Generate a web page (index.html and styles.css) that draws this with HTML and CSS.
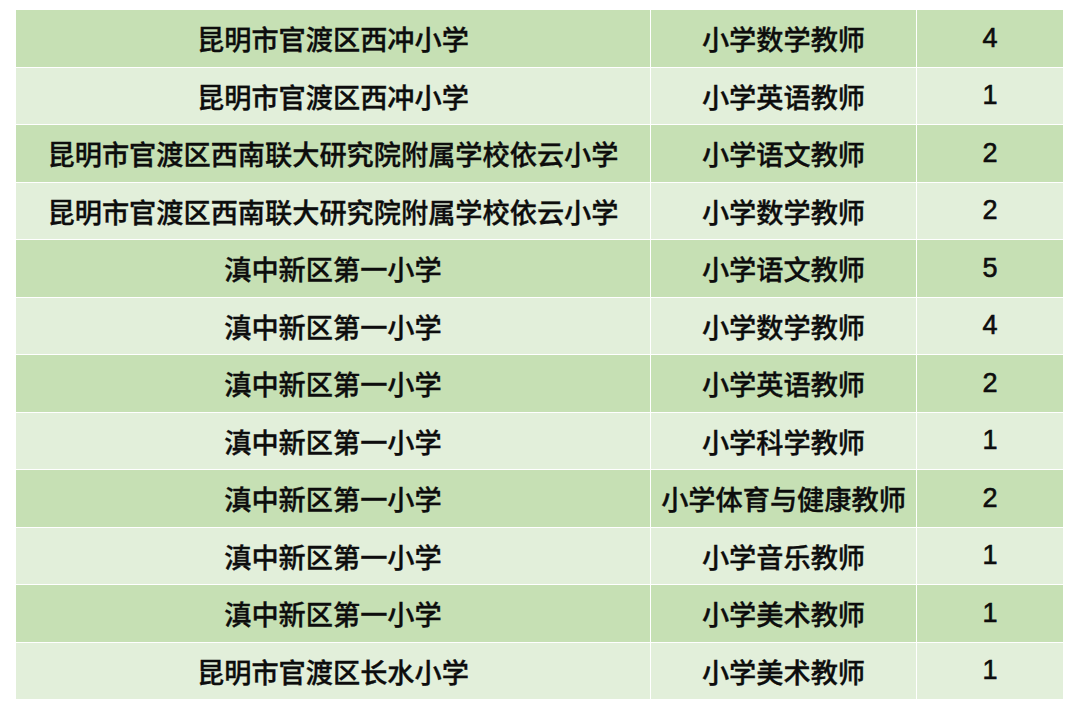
FILE: index.html
```html
<!DOCTYPE html>
<html lang="zh">
<head>
<meta charset="utf-8">
<link rel="stylesheet" href="styles.css">
</head>
<body>
<div class="table">
  <div class="row dark"><div class="cell">昆明市官渡区西冲小学</div><div class="cell">小学数学教师</div><div class="cell num">4</div></div>
  <div class="row light"><div class="cell">昆明市官渡区西冲小学</div><div class="cell">小学英语教师</div><div class="cell num">1</div></div>
  <div class="row dark"><div class="cell">昆明市官渡区西南联大研究院附属学校依云小学</div><div class="cell">小学语文教师</div><div class="cell num">2</div></div>
  <div class="row light"><div class="cell">昆明市官渡区西南联大研究院附属学校依云小学</div><div class="cell">小学数学教师</div><div class="cell num">2</div></div>
  <div class="row dark"><div class="cell">滇中新区第一小学</div><div class="cell">小学语文教师</div><div class="cell num">5</div></div>
  <div class="row light"><div class="cell">滇中新区第一小学</div><div class="cell">小学数学教师</div><div class="cell num">4</div></div>
  <div class="row dark"><div class="cell">滇中新区第一小学</div><div class="cell">小学英语教师</div><div class="cell num">2</div></div>
  <div class="row light"><div class="cell">滇中新区第一小学</div><div class="cell">小学科学教师</div><div class="cell num">1</div></div>
  <div class="row dark"><div class="cell">滇中新区第一小学</div><div class="cell">小学体育与健康教师</div><div class="cell num">2</div></div>
  <div class="row light"><div class="cell">滇中新区第一小学</div><div class="cell">小学音乐教师</div><div class="cell num">1</div></div>
  <div class="row dark"><div class="cell">滇中新区第一小学</div><div class="cell">小学美术教师</div><div class="cell num">1</div></div>
  <div class="row light"><div class="cell">昆明市官渡区长水小学</div><div class="cell">小学美术教师</div><div class="cell num">1</div></div>
</div>
</body>
</html>
```
FILE: styles.css
```css
html, body {
  margin: 0;
  padding: 0;
  background: #ffffff;
}
body {
  padding: 10px 0 0 16px;
  font-family: "Noto Sans CJK SC", "Liberation Sans", sans-serif;
}
.table {
  width: 1047px;
  display: flex;
  flex-direction: column;
  gap: 1px;
  background: #ffffff;
}
.row {
  display: grid;
  grid-template-columns: 634px 265px 146px;
  column-gap: 1px;
  height: 56.5px;
}
.cell {
  display: flex;
  align-items: center;
  justify-content: center;
  font-size: 27.2px;
  font-weight: 500;
  color: #0d0d0d;
  white-space: nowrap;
  -webkit-text-stroke: 0.35px #0d0d0d;
}
.dark .cell {
  background: #c6e0b4;
}
.light .cell {
  background: #e2efda;
}
.num {
  font-family: "Liberation Sans", sans-serif;
  font-weight: 400;
  font-size: 27px;
  -webkit-text-stroke: 0.6px #0d0d0d;
}
```
